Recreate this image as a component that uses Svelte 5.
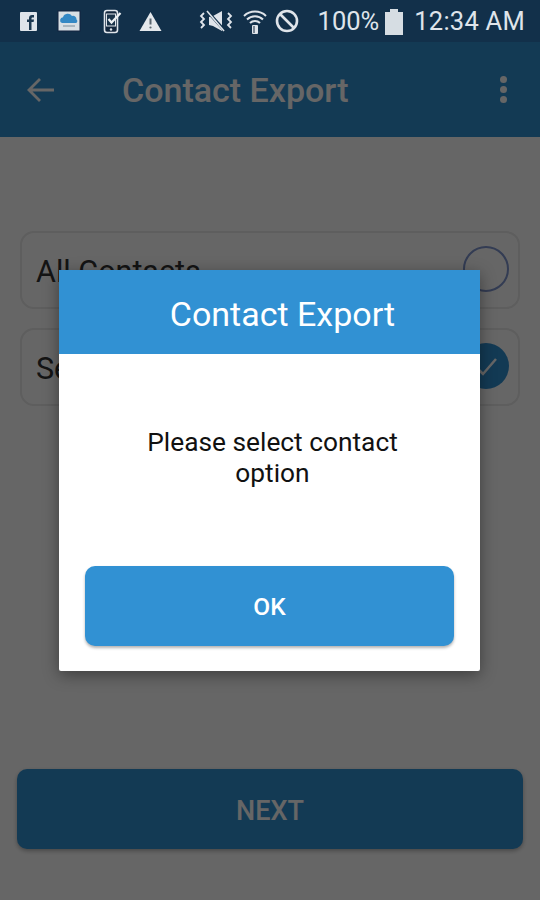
<script>
    const options = [
        { label: 'All Contacts', checked: false },
        { label: 'Selected Contacts', checked: true },
    ];
</script>

<div class="screen">
    <div class="status">
        <div class="notifs">
            <svg class="fb" width="19" height="21" viewBox="0 0 19 21">
                <rect x="1" y="1" width="17" height="19" rx="1" fill="#dfe4ea" />
                <path d="M10 19V11H8V8.6h2V7c0-2 1.2-3 3-3h2v2.400h-1.400c-.8 0-1.100.4-1.100 1.100v1.100H15L14.600 11h-2.100v8z" fill="#1c3850" />
            </svg>
            <svg class="cloud" width="24" height="24" viewBox="0 0 24 24">
                <rect x="0.500" y="1.500" width="23" height="21" fill="#12223f" />
                <rect x="1.500" y="2.500" width="21" height="19" fill="#d8dfe4" />
                <path d="M5 14a3 3 0 0 1 1-5.800A5 5 0 0 1 15 7a3.500 3.500 0 0 1 4.500 3.500A2 2 0 0 1 19 14z" fill="#3488c4" />
                <path d="M6 17h12" stroke="#a9b6bf" stroke-width="2" />
            </svg>
            <svg class="phone" width="20" height="25" viewBox="0 0 20 25">
                <rect x="1.500" y="1.500" width="13" height="22" rx="2.500" fill="#12263c" stroke="#dfe4ea" stroke-width="1.600" />
                <rect x="3.500" y="5" width="9" height="12" fill="#1a3349" stroke="#dfe4ea" stroke-width="1" />
                <path d="M5.500 10l3 3.500L17.500 4" fill="none" stroke="#eef1f4" stroke-width="2.200" />
                <circle cx="8" cy="20.500" r="1.200" fill="#dfe4ea" />
            </svg>
            <svg class="warn" width="23" height="21" viewBox="0 0 23 21">
                <path d="M11.500 1L22.500 20H.5z" fill="#e4e8ec" />
                <path d="M11.500 7.500v6" stroke="#5a6670" stroke-width="2" />
                <circle cx="11.500" cy="16.500" r="1.100" fill="#5a6670" />
            </svg>
        </div>
        <div class="system">
            <svg class="mute" width="34" height="24" viewBox="0 0 34 24">
                <path d="M10 8l4-1 9-5v20l-9-5-4-1z" fill="#dfe4ea" />
                <path d="M9 3l17 19" stroke="#12304a" stroke-width="3" />
                <path d="M8 2l17 20" stroke="#dfe4ea" stroke-width="1.600" />
                <path d="M5 4L2 7l3 3-3 3 3 3-3 3M29 4l3 3-3 3 3 3-3 3 3 3" fill="none" stroke="#dfe4ea" stroke-width="1.800" />
            </svg>
            <svg class="wifi" width="24" height="27" viewBox="0 0 24 27">
                <path d="M1 8a16 16 0 0 1 22 0M4 11.500a11.500 11.500 0 0 1 16 0M7 15a7 7 0 0 1 10 0" fill="none" stroke="#dfe4ea" stroke-width="2" />
                <rect x="9" y="17" width="6" height="9" rx="1" fill="#dfe4ea" />
                <path d="M11 18v7" stroke="#12263c" stroke-width="1" />
            </svg>
            <svg class="block" width="24" height="24" viewBox="0 0 24 24">
                <circle cx="12" cy="12" r="10" fill="none" stroke="#dfe4ea" stroke-width="2.600" />
                <path d="M5 5l14 14" stroke="#dfe4ea" stroke-width="2.600" />
            </svg>
            <span class="pct">100%</span>
            <svg class="batt" width="18" height="27" viewBox="0 0 18 27">
                <path d="M5 1h8v3h5v23H0V4h5z" fill="#d6dde3" />
            </svg>
            <span class="time">12:34 AM</span>
        </div>
    </div>

    <header class="appbar">
        <svg class="back" width="30" height="28" viewBox="0 0 30 28">
            <path d="M28 14H3M14 3L3 14l11 11" fill="none" stroke="currentColor" stroke-width="2.800" />
        </svg>
        <h1>Contact Export</h1>
        <div class="more"><i></i><i></i><i></i></div>
    </header>

    <main>
        <div class="options">
            {#each options as opt}
                <div class="option">
                    <span>{opt.label}</span>
                    {#if opt.checked}
                        <svg width="46" height="46" viewBox="0 0 46 46">
                            <circle cx="23" cy="23" r="23" fill="#3191d3" />
                            <path d="M13 24l7 7 13-15" fill="none" stroke="#fff" stroke-width="2.500" />
                        </svg>
                    {:else}
                        <svg width="46" height="46" viewBox="0 0 46 46">
                            <circle cx="23" cy="23" r="22" fill="none" stroke="#7f96d0" stroke-width="2" />
                        </svg>
                    {/if}
                </div>
            {/each}
        </div>
        <button class="next">NEXT</button>
    </main>

    <div class="overlay">
        <div class="dialog">
            <div class="dialog-head">Contact Export</div>
            <div class="dialog-body">
                <p>Please select contact<br />option</p>
                <button class="ok">OK</button>
            </div>
        </div>
    </div>
</div>

<style>
    :global(body) {
        background: #fff;
    }

    .screen {
        position: relative;
        width: 540px;
        height: 900px;
        display: flex;
        flex-direction: column;
        overflow: hidden;
        background: #fff;
        font-family: Roboto, "Liberation Sans", sans-serif;
    }

    .status {
        position: relative;
        z-index: 2;
        height: 42px;
        flex: none;
        display: flex;
        align-items: center;
        justify-content: space-between;
        padding: 0 15px 0 19px;
        background: #12304a;
        color: #dfe4ea;
    }

    .notifs,
    .system {
        display: flex;
        align-items: center;
    }

    .fb { margin-right: 19px; }
    .cloud { margin-right: 22px; }
    .phone { margin-right: 16px; }
    .mute { margin-right: 10px; }
    .wifi { margin-right: 8px; }
    .block { margin-right: 19px; }
    .batt { margin: 0 11px 0 6px; }

    .pct,
    .time {
        font-size: 25.500px;
        line-height: 30px;
    }

    .time {
        letter-spacing: 0.250px;
    }

    .appbar {
        height: 95px;
        flex: none;
        display: flex;
        align-items: center;
        padding: 0 33px 0 26px;
        background: #3191d3;
        color: #fff;
        box-shadow: 0 2px 4px rgba(0, 0, 0, 0.3);
    }

    .back {
        flex: none;
    }

    h1 {
        flex: 1;
        margin: 0 0 0 66px;
        font-size: 34px;
        font-weight: 500;
    }

    .more {
        display: flex;
        flex-direction: column;
        gap: 3px;
    }

    .more i {
        width: 7px;
        height: 7px;
        border-radius: 50%;
        background: #fff;
    }

    main {
        flex: 1;
        display: flex;
        flex-direction: column;
        justify-content: space-between;
        padding: 94px 17px 51px;
        background: #fff;
    }

    .options {
        display: flex;
        flex-direction: column;
        gap: 19px;
        padding: 0 3px;
    }

    .option {
        height: 78px;
        box-sizing: border-box;
        display: flex;
        align-items: center;
        justify-content: space-between;
        padding: 0 9px 2px 14px;
        border: 2px solid #eaeaea;
        border-radius: 14px;
        font-size: 30.500px;
        color: #333;
    }

    .option span {
        padding-top: 4px;
    }

    .next,
    .ok {
        display: block;
        border: none;
        border-radius: 10px;
        background: #3191d3;
        color: #fff;
        font-family: inherit;
    }

    .next {
        width: 506px;
        height: 80px;
        padding: 3px 0 0;
        font-size: 27px;
        font-weight: 500;
        box-shadow: 0 2px 4px rgba(0, 0, 0, 0.3);
    }

    .overlay {
        position: absolute;
        inset: 42px 0 0 0;
        display: flex;
        align-items: center;
        justify-content: center;
        background: rgba(0, 0, 0, 0.6);
    }

    .dialog {
        width: 421px;
        height: 401px;
        display: flex;
        flex-direction: column;
        margin: 0 1px 1px 0;
        background: #fff;
        border-radius: 2px;
        box-shadow: 0 4px 16px rgba(0, 0, 0, 0.4);
    }

    .dialog-head {
        height: 84px;
        flex: none;
        display: flex;
        align-items: center;
        justify-content: center;
        padding: 3px 0 0 26px;
        box-sizing: border-box;
        background: #3191d3;
        color: #fff;
        font-size: 34px;
    }

    .dialog-body {
        flex: 1;
        display: flex;
        flex-direction: column;
        justify-content: space-between;
        padding: 73px 26px 25px;
    }

    p {
        margin: 0;
        padding-left: 6px;
        text-align: center;
        font-size: 26.300px;
        line-height: 31px;
        color: #111;
    }

    .ok {
        width: 369px;
        height: 80px;
        padding: 0;
        font-size: 24.500px;
        font-weight: 500;
        box-shadow: 0 2px 3px rgba(0, 0, 0, 0.3);
    }
</style>
